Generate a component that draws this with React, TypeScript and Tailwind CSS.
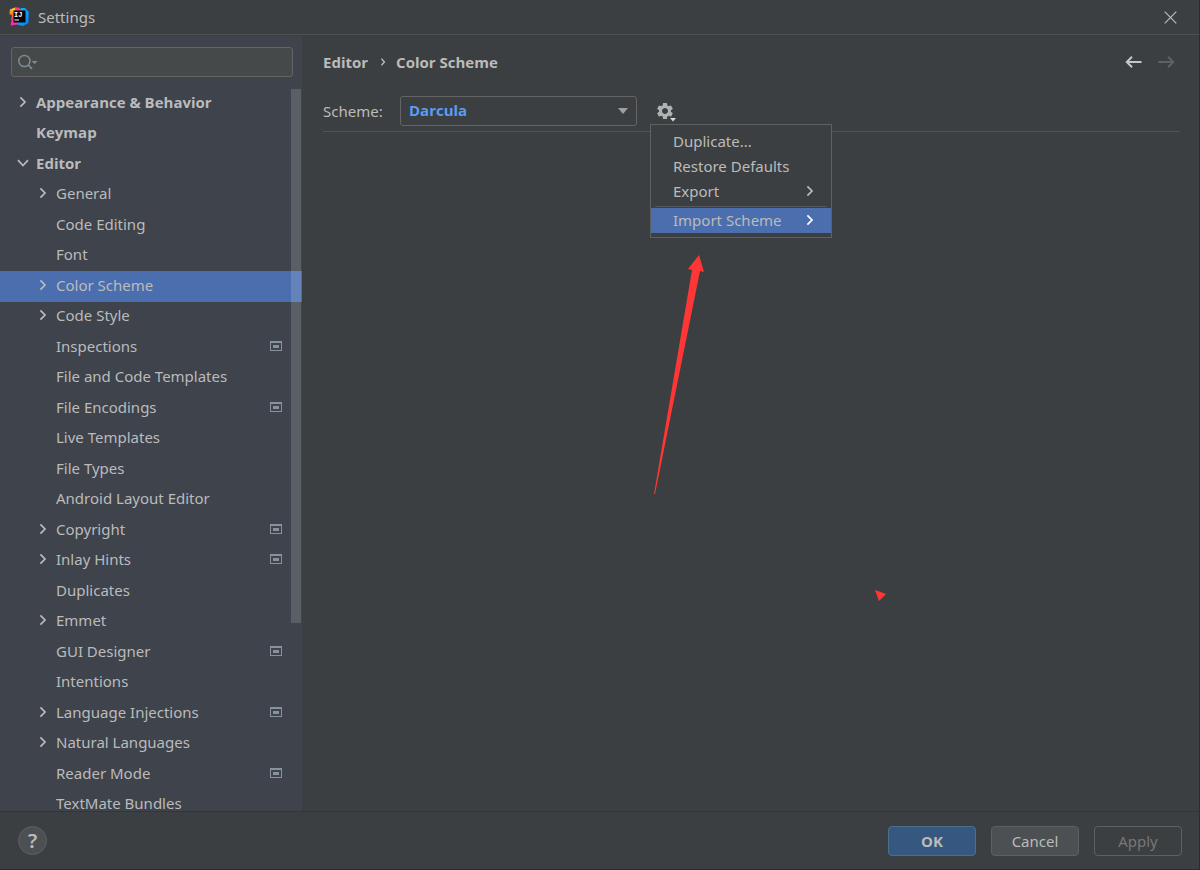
import { useState } from "react";
import { MdSettings } from "react-icons/md";
import clsx from "clsx";

type Item = {
  label: string;
  level: 0 | 1;
  state?: "open" | "closed";
  project?: boolean;
};

const ITEMS: Item[] = [
  { label: "Appearance & Behavior", level: 0, state: "closed" },
  { label: "Keymap", level: 0 },
  { label: "Editor", level: 0, state: "open" },
  { label: "General", level: 1, state: "closed" },
  { label: "Code Editing", level: 1 },
  { label: "Font", level: 1 },
  { label: "Color Scheme", level: 1, state: "closed" },
  { label: "Code Style", level: 1, state: "closed" },
  { label: "Inspections", level: 1, project: true },
  { label: "File and Code Templates", level: 1 },
  { label: "File Encodings", level: 1, project: true },
  { label: "Live Templates", level: 1 },
  { label: "File Types", level: 1 },
  { label: "Android Layout Editor", level: 1 },
  { label: "Copyright", level: 1, state: "closed", project: true },
  { label: "Inlay Hints", level: 1, state: "closed", project: true },
  { label: "Duplicates", level: 1 },
  { label: "Emmet", level: 1, state: "closed" },
  { label: "GUI Designer", level: 1, project: true },
  { label: "Intentions", level: 1 },
  { label: "Language Injections", level: 1, state: "closed", project: true },
  { label: "Natural Languages", level: 1, state: "closed" },
  { label: "Reader Mode", level: 1, project: true },
  { label: "TextMate Bundles", level: 1 },
];

function Chevron({ open, className }: { open?: boolean; className?: string }) {
  return (
    <svg viewBox="0 0 12 12" className={clsx("size-3 shrink-0", className)} fill="none" stroke="currentColor" strokeWidth="1.7">
      <path d={open ? "M1 3.2 L6 8.6 L11 3.2" : "M3.4 1.4 L8 6 L3.4 10.6"} />
    </svg>
  );
}

function AppLogo() {
  return (
    <svg viewBox="0 0 20 20" className="size-5" aria-hidden="true">
      <defs>
        <linearGradient id="warm" x1="0" y1="0" x2="0" y2="1">
          <stop offset="0" stopColor="#fdd835" />
          <stop offset="0.45" stopColor="#fc801d" />
          <stop offset="1" stopColor="#fe2857" />
        </linearGradient>
        <linearGradient id="cool" x1="0" y1="0" x2="1" y2="1">
          <stop offset="0" stopColor="#07c3f2" />
          <stop offset="1" stopColor="#087cfa" />
        </linearGradient>
      </defs>
      <path d="M12 1 L16 1 L19.8 5 L19.4 16 L14 19 L8 17.5 L9 6Z" fill="url(#cool)" />
      <path d="M1 2.5 L6 0.5 L10 3 L9 14 L2 13 L3 8.5 L0.4 7Z" fill="url(#warm)" />
      <path d="M6 0.5 L10 0.5 L13 5 L6 5Z" fill="#fe3c8c" />
      <path d="M3 12 L1.5 18.6 L8 17.5 L10 14Z" fill="#f92fb0" />
      <rect x="4.5" y="3.5" width="12" height="12" fill="#0a0505" />
      <text x="5" y="10" fontSize="7" fontWeight="700" fontFamily="Liberation Mono, monospace" fill="#fff">IJ</text>
      <rect x="5.5" y="12.5" width="4.5" height="1" fill="#fff" />
    </svg>
  );
}

function ProjectIcon() {
  return (
    <svg viewBox="0 0 12 10" className="mr-5 ml-auto h-[10px] w-3 shrink-0" aria-hidden="true">
      <path fill="#87939a" fillRule="evenodd" d="M0 0H12V10H0Z M1 2V9H11V2Z" />
      <rect x="3" y="4" width="6" height="3" fill="#87939a" />
    </svg>
  );
}

function Sidebar() {
  const [selected, setSelected] = useState("Color Scheme");

  return (
    <aside className="relative flex w-[302px] shrink-0 flex-col bg-[#3e434c]">
      <label className="mt-[11px] mr-[9px] mb-[11px] ml-[11px] flex h-[30px] shrink-0 items-center rounded-[3px] border border-[#646464] bg-[#45494a] pl-[6px]">
        <svg viewBox="0 0 20 16" className="h-4 w-5 shrink-0" aria-hidden="true">
          <circle cx="6.4" cy="7" r="5.6" fill="none" stroke="#7f8b91" strokeWidth="1.5" />
          <path d="M10.4 11 L14 14.8" stroke="#7f8b91" strokeWidth="1.8" />
          <path d="M13.6 7 H19.6 L16.6 10Z" fill="#7f8b91" />
        </svg>
        <input type="text" aria-label="Search settings" className="min-w-0 flex-1 bg-transparent px-1 outline-none" />
      </label>

      <ul className="min-h-0 flex-1 overflow-hidden">
        {ITEMS.map((item) => (
          <li key={item.label} className="odd:h-[31px] even:h-[30px]">
            <button
              type="button"
              onClick={() => setSelected(item.label)}
              className={clsx(
                "flex h-full w-full items-center pb-1 text-left whitespace-nowrap",
                item.level === 0 ? "pl-[17px] font-['Open_Sans',sans-serif] font-bold" : "pl-[37px]",
                selected === item.label && "bg-[#4b6eaf]",
              )}
            >
              <span className="mr-[7px] flex w-3 shrink-0">
                {item.state && <Chevron open={item.state === "open"} />}
              </span>
              {item.label}
              {item.project && <ProjectIcon />}
            </button>
          </li>
        ))}
      </ul>

      {/* scrollbar thumb lies over the rows */}
      <div className="absolute top-[53px] right-px h-[534px] w-[10px] bg-white/15" />
    </aside>
  );
}

function SchemeMenu() {
  const item = "flex h-[25px] w-full items-center justify-between pr-[15px] pb-[2px] pl-[22px] text-left hover:bg-[#4b6eaf]";
  return (
    <div role="menu" className="absolute top-[28px] left-[-7px] w-[182px] border border-[#5e6162] bg-[#3c3f41] py-1 whitespace-nowrap">
      <button type="button" role="menuitem" className={item}>Duplicate...</button>
      <button type="button" role="menuitem" className={item}>Restore Defaults</button>
      <button type="button" role="menuitem" className={item}>
        Export <Chevron />
      </button>
      <div role="separator" className="mx-1 mt-[2px] mb-px h-px bg-[#555758]" />
      <button type="button" role="menuitem" className={clsx(item, "bg-[#4b6eaf]")}>
        Import Scheme <Chevron className="text-white" />
      </button>
    </div>
  );
}

function SchemePage() {
  const [menuOpen, setMenuOpen] = useState(true);

  return (
    <main className="relative min-w-0 flex-1 pt-[15px] pr-[19px] pl-[21px]">
      <div className="flex h-[22px] items-center font-['Open_Sans',sans-serif] font-bold">
        <span>Editor</span>
        <svg viewBox="0 0 6 10" className="mr-[10px] ml-3 h-[10px] w-[6px]" fill="none" stroke="currentColor" strokeWidth="1.4" aria-hidden="true">
          <path d="M1.4 1.6 L4.4 5 L1.4 8.4" />
        </svg>
        <h1>Color Scheme</h1>
        <div className="ml-auto flex items-center gap-4 pr-[5px]">
          <button type="button" aria-label="Back" className="text-[#c4c6c8]">
            <svg viewBox="0 0 17 12" className="h-3 w-[17px]" fill="none" stroke="currentColor" strokeWidth="2">
              <path d="M16.5 6 H1.8 M7 0.8 L1.8 6 L7 11.2" />
            </svg>
          </button>
          <button type="button" aria-label="Forward" disabled className="text-[#5f6162]">
            <svg viewBox="0 0 17 12" className="h-3 w-[17px]" fill="none" stroke="currentColor" strokeWidth="2">
              <path d="M0.5 6 H15.2 M10 0.8 L15.2 6 L10 11.2" />
            </svg>
          </button>
        </div>
      </div>

      <div className="mt-[23px] flex items-center border-b border-[#515456] pb-[5px]">
        <label htmlFor="scheme" className="w-[77px]">Scheme:</label>
        <div className="relative">
          <select id="scheme" defaultValue="Darcula"
            className="block h-[30px] w-[237px] appearance-none rounded-[3px] border border-[#646464] bg-[#3c3f41] px-2 pb-[2px] font-['Open_Sans',sans-serif] font-bold text-[#589df6] outline-none">
            <option>Darcula</option>
            <option>High contrast</option>
            <option>IntelliJ Light</option>
          </select>
          <svg viewBox="0 0 10 6" className="pointer-events-none absolute top-3 right-[9px] h-[6px] w-[10px]" aria-hidden="true">
            <path d="M0 0 H10 L5 6Z" fill="#9da0a2" />
          </svg>
        </div>
        <div className="relative ml-5">
          <button type="button" aria-label="Scheme actions" aria-expanded={menuOpen}
            onClick={() => setMenuOpen(!menuOpen)} className="relative block h-[30px] w-4">
            <MdSettings className="-mx-[2px] size-5 max-w-none text-[#afb1b3]" />
            <svg viewBox="0 0 6 4" className="absolute right-[-3px] bottom-1 h-1 w-[6px]" aria-hidden="true">
              <path d="M0 0 H6 L3 3.6Z" fill="#d8d9da" />
            </svg>
          </button>
          {menuOpen && <SchemeMenu />}
        </div>
      </div>

      {/* red pointer drawn over the page */}
      <svg viewBox="0 0 240 350" className="pointer-events-none absolute top-[218px] left-[350px] h-[350px] w-[240px]" fill="#ff3636" aria-hidden="true">
        <path d="M47 1 L52 18 L48 17 L3 240 L2 240 L40 16 L36 15Z" />
        <path d="M223 336 L234 340 L227 347Z" />
      </svg>
    </main>
  );
}

export default function App() {
  const button = "h-[30px] w-[88px] rounded-[4px] border";

  return (
    <div className="flex h-screen flex-col overflow-hidden border-r border-b border-[#2a2c2d] bg-[#3c3f41] font-['Noto_Sans',sans-serif] text-[15px] leading-5 text-[#bbbbbb]">
      <header className="flex h-[35px] shrink-0 items-center border-b border-[#4e5052] pl-[9px]">
        <AppLogo />
        <span className="ml-[9px]">Settings</span>
        <button type="button" aria-label="Close" className="mr-[22px] ml-auto">
          <svg viewBox="0 0 13 13" className="size-[13px]" stroke="#bbbbbb" strokeWidth="1.2">
            <path d="M0.7 0.7 L12.3 12.3 M12.3 0.7 L0.7 12.3" />
          </svg>
        </button>
      </header>

      <div className="flex min-h-0 flex-1 pt-px">
        <Sidebar />
        <SchemePage />
      </div>

      <footer className="flex h-[58px] shrink-0 items-center gap-[15px] border-t border-[#333537] pr-[17px] pl-[18px]">
        <button type="button" aria-label="Help"
          className="mr-auto flex size-[29px] items-center justify-center rounded-full border border-[#5e6162] bg-[#4c5052] text-xl font-semibold">
          ?
        </button>
        <button type="button" className={clsx(button, "border-[#4c708c] bg-[#365880] font-['Open_Sans',sans-serif] font-bold")}>OK</button>
        <button type="button" className={clsx(button, "border-[#5e6060] bg-[#4c5052]")}>Cancel</button>
        <button type="button" disabled className={clsx(button, "border-[#5e6060] text-[#777777]")}>Apply</button>
      </footer>
    </div>
  );
}
